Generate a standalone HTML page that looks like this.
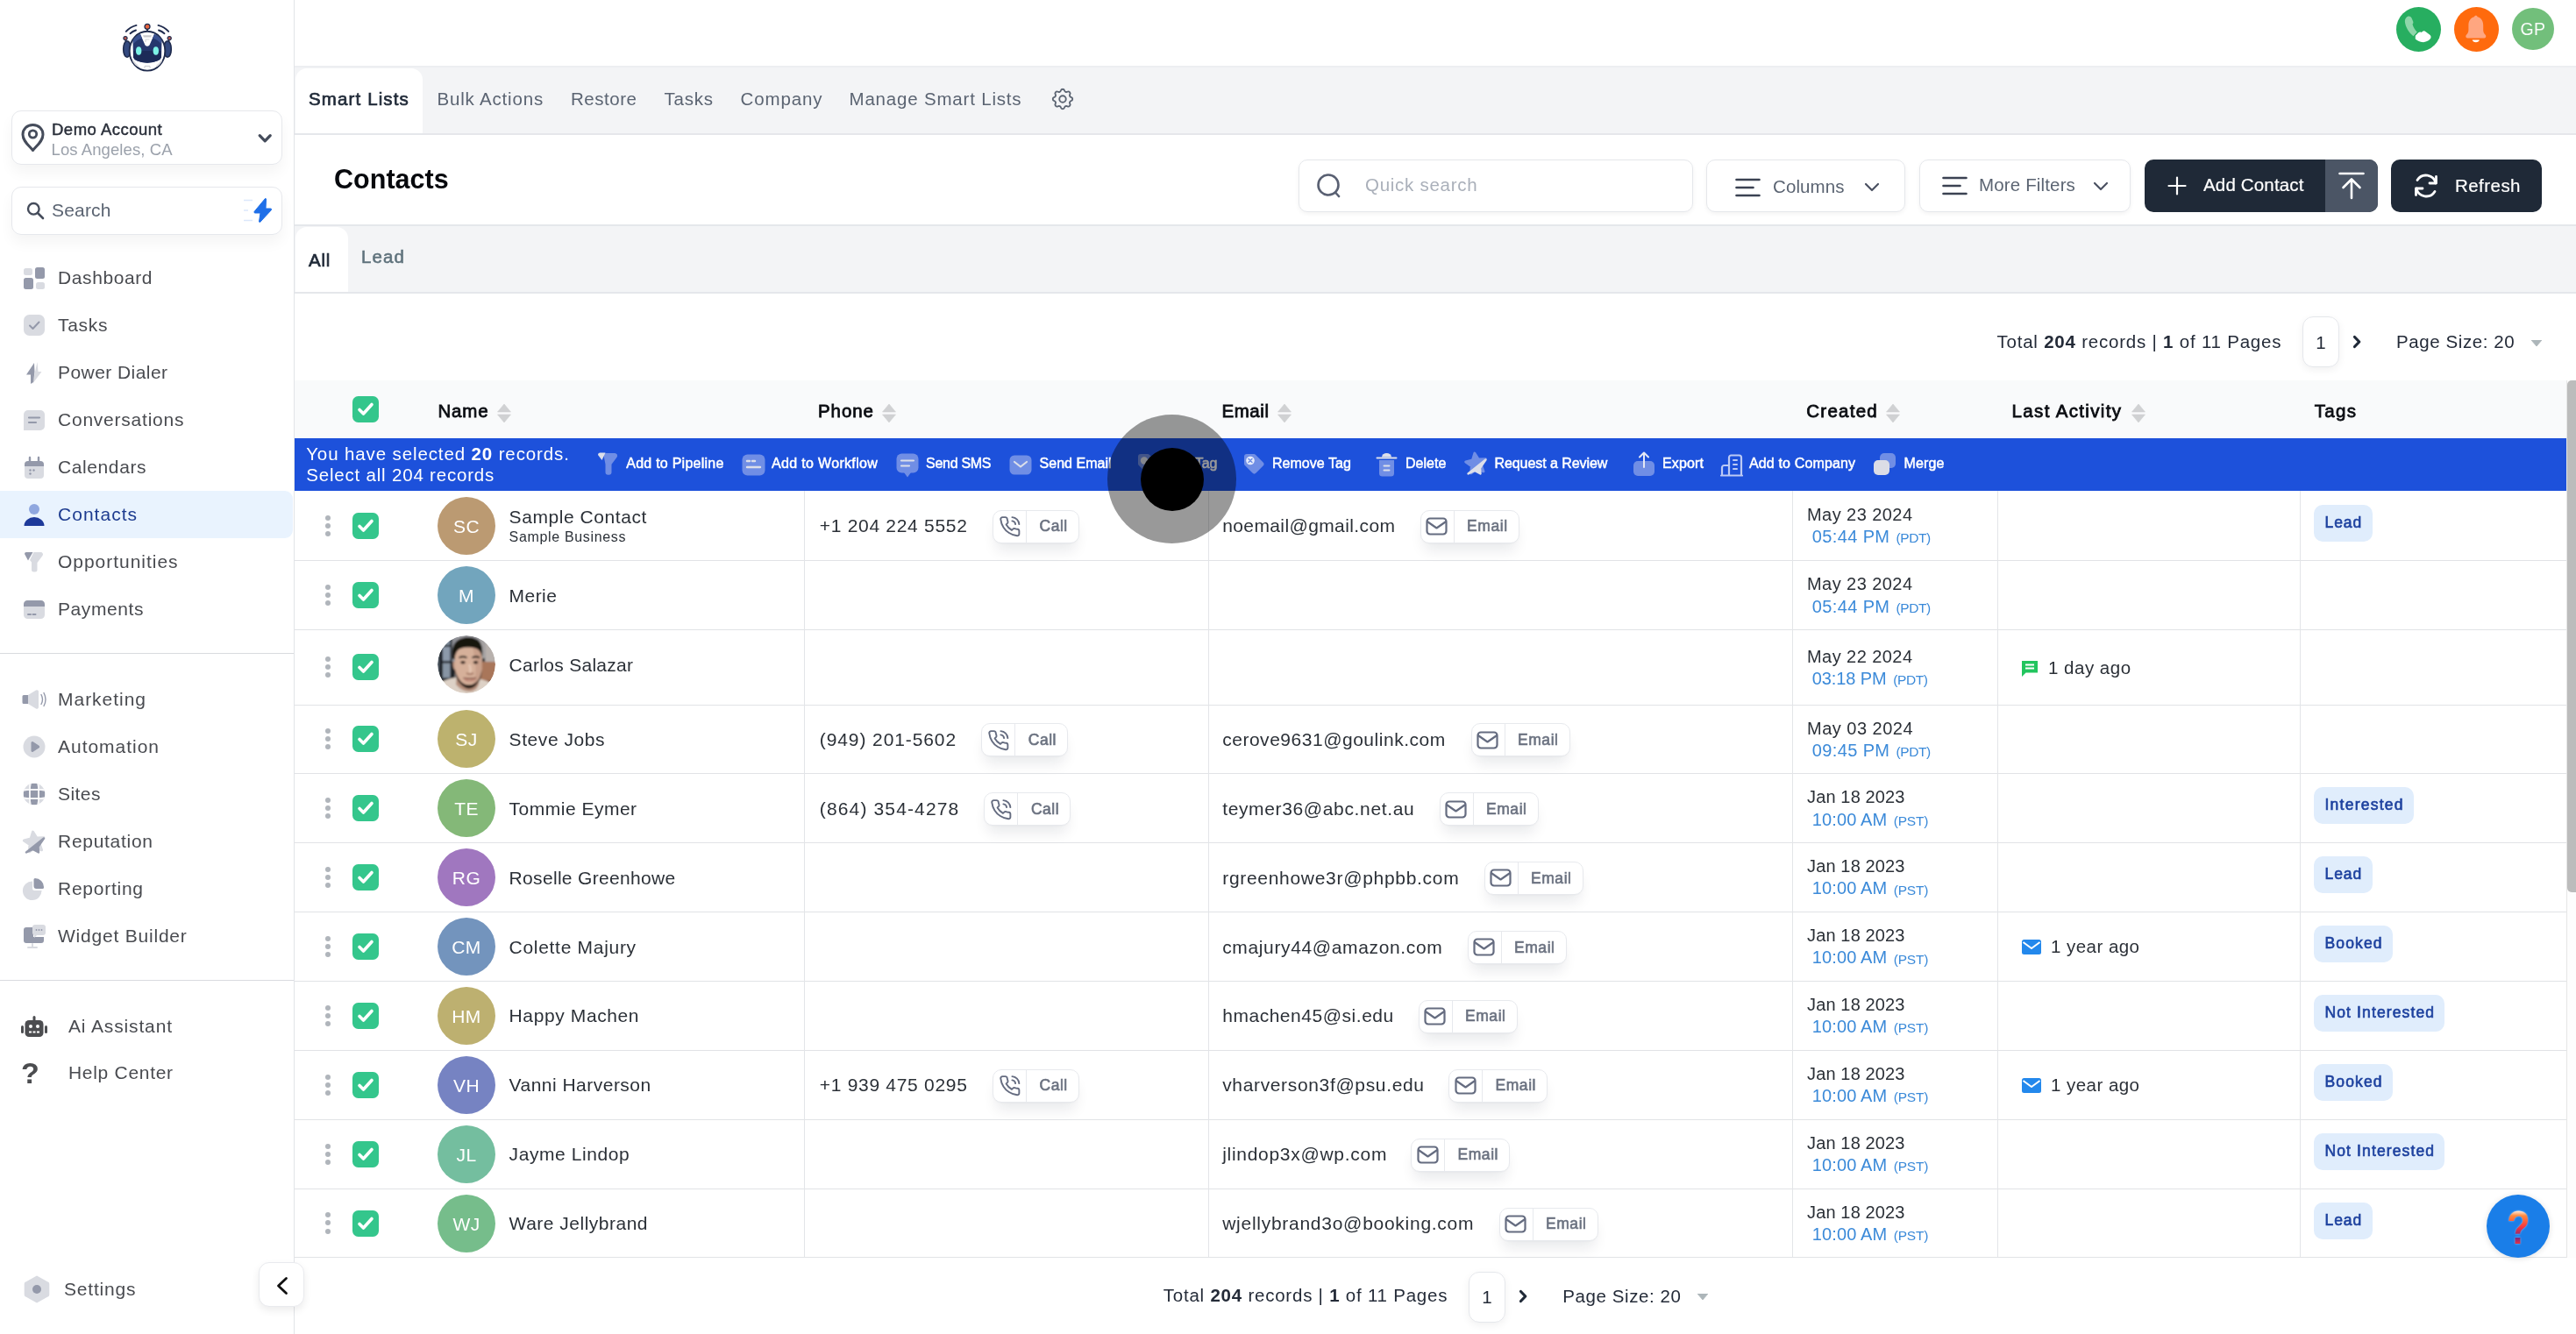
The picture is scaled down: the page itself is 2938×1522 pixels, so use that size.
<!DOCTYPE html>
<html lang="en">
<head>
<meta charset="utf-8">
<title>Contacts</title>
<style>
*{box-sizing:border-box;margin:0;padding:0}
html,body{width:2938px;height:1522px;overflow:hidden;background:#fff}
body{font-family:"Liberation Sans",sans-serif;color:#2d3138;position:relative;-webkit-font-smoothing:antialiased}
#wrap{position:absolute;left:0;top:0;width:2938px;height:1522px;will-change:transform}
.abs{position:absolute}
svg{display:block}
/* sidebar */
#sb{position:absolute;left:0;top:0;width:336px;height:1522px;background:#fff;border-right:1px solid #e2e4e8}
.acct{position:absolute;left:12.500px;top:126px;width:309.500px;height:61.500px;border:1px solid #e6e8ec;border-radius:11px;box-shadow:0 9px 16px rgba(0,0,0,.045)}
.srch{position:absolute;left:12.500px;top:212.500px;width:309.500px;height:55px;border:1px solid #e6e8ec;border-radius:11px;box-shadow:0 9px 16px rgba(0,0,0,.045)}
.nav{position:absolute;left:0;width:334px;height:54px}
.nav .ic{position:absolute;left:25px;top:13px;width:28px;height:28px}
.nav .tx{position:absolute;left:66px;top:0;line-height:54px;font-size:21px;color:#494b50;white-space:nowrap}
.nav.act{background:#e9f3fe;border-radius:0 9px 9px 0}
.nav.act .tx{color:#1d3b8f}
.hr{position:absolute;left:0;width:335px;height:1px;background:#d9dbdf}
/* main */
.t{position:absolute;white-space:nowrap;line-height:1}
.btn{position:absolute;border:1px solid #e5e7eb;border-radius:10px;background:#fff;box-shadow:0 2px 5px rgba(0,0,0,.05)}
.cb{position:absolute;width:30px;height:30px;border-radius:6.500px;background:#34c68c}
.cb svg{position:absolute;left:5px;top:6px}
.kb{position:absolute;left:370.500px;width:6px}
.kb i{display:block;width:6px;height:6px;border-radius:50%;background:#b0b5bb;margin-bottom:3.2px}
.av{position:absolute;left:499px;width:66px;height:66px;border-radius:50%}
.rowline{position:absolute;left:336px;width:2592px;height:1px;background:#e1e3e6}
.vline{position:absolute;top:560px;width:1px;height:874px;background:#e3e5e8}
.cell{position:absolute;white-space:nowrap;font-size:20.5px;color:#2d3138;letter-spacing:.5px;line-height:24px}
.pill{position:absolute;height:38px;border:1px solid #e7e9ed;border-radius:10px;background:#fff;box-shadow:0 12px 16px -4px rgba(16,24,40,.09),0 1px 2px rgba(0,0,0,.03)}
.pi{position:absolute}
.pill .sep{position:absolute;left:37px;top:0;width:1px;height:36px;background:#e7e9ed}
.pill .pt{position:absolute;top:0;line-height:36px;font-size:17.5px;font-weight:700;color:#6b7280;letter-spacing:.2px}

.d1{position:absolute;left:2060px;font-size:20.5px;letter-spacing:.75px;color:#2d3138;white-space:nowrap;line-height:24px}
.d2{position:absolute;left:2066px;font-size:20.5px;letter-spacing:.75px;color:#3b8ad9;white-space:nowrap;line-height:24px}
.d2 small{font-size:15.5px;letter-spacing:.4px}
.tag{position:absolute;left:2639.200px;height:42px;border-radius:10px;background:#e0edfc}
.act{ }
.ba{position:absolute;top:521px;font-size:17px;font-weight:700;color:#fff;white-space:nowrap;line-height:20px;letter-spacing:.1px}
.bi{position:absolute}
.th{position:absolute;top:458px;font-size:21.5px;font-weight:700;color:#0b0d12;white-space:nowrap;line-height:26px;letter-spacing:.2px}
.sort{position:absolute;top:461px;width:16px;height:21px}
@media (max-width:2000px){html,body{width:1469px;height:761px}#wrap{zoom:.5}}
</style>
</head>
<body>
<div id="wrap">
<div id="sb">
<!-- logo -->
<svg class="abs" style="left:138px;top:25px" width="60" height="60" viewBox="0 0 60 60">
 <g fill="none" stroke="#1f2b4d" stroke-width="1.900" stroke-linecap="round">
  <path d="M5.800 10.900 Q10.500 5.800 17.500 3.900"/><path d="M10.500 13.200 Q13.300 10.700 17 9.500"/>
  <path d="M54.200 10.900 Q49.500 5.800 42.500 3.900"/><path d="M49.500 13.200 Q46.700 10.700 43 9.500"/>
 </g>
 <line x1="30" y1="7" x2="30" y2="11.500" stroke="#1f2b4d" stroke-width="1.800"/>
 <circle cx="30" cy="5.300" r="3" fill="#e8643c" stroke="#1f2b4d" stroke-width="1.300"/>
 <path d="M5.500 25 L5.300 20" stroke="#1f2b4d" stroke-width="1.500"/><path d="M54.500 25 L54.700 20" stroke="#1f2b4d" stroke-width="1.500"/>
 <circle cx="5" cy="18.600" r="2.100" fill="#b3564f" stroke="#1f2b4d" stroke-width="1.100"/><circle cx="55.200" cy="18.600" r="2.100" fill="#b3564f" stroke="#1f2b4d" stroke-width="1.100"/>
 <ellipse cx="7" cy="31" rx="4.300" ry="9.300" fill="#33497f" stroke="#1f2b4d" stroke-width="1.600"/>
 <ellipse cx="53" cy="31" rx="4.300" ry="9.300" fill="#33497f" stroke="#1f2b4d" stroke-width="1.600"/>
 <ellipse cx="30" cy="33.200" rx="20.300" ry="22.400" fill="#fff" stroke="#1f2b4d" stroke-width="1.900"/>
 <path d="M13.500 21 Q17 15.500 22 14 L27.500 26.500 Q30 29.200 32.500 26.500 L38 14 Q43 15.500 46.500 21 L46 40.500 Q44.500 45.500 30 46.800 Q15.500 45.500 14 40.500 Z" fill="#25376d"/>
 <path d="M14 33 L46 33 L46 40.500 Q44.500 45.500 30 46.800 Q15.500 45.500 14 40.500 Z" fill="#1c2a58"/>
 <path d="M13.500 21 Q17 15.500 22 14 L24 18.500 Q18 20 14.500 25 Z M46.500 21 Q43 15.500 38 14 L36 18.500 Q42 20 45.500 25 Z" fill="#3a5190"/>
 <ellipse cx="20.200" cy="33" rx="3.200" ry="4.700" fill="#7df2e6"/>
 <ellipse cx="39.800" cy="33" rx="3.200" ry="4.700" fill="#7df2e6"/>
 <path d="M25 15.200 L35 15.200 L34 17.500 L26 17.500 Z" fill="#c9c9cc"/>
 <path d="M28 20 h4.500 M28 20 v3" stroke="#d5d5d8" stroke-width="1.100" fill="none"/>
 <path d="M13.500 44 q2.500 4.500 6 6.500 M46.500 44 q-2.500 4.500 -6 6.500" stroke="#d9dade" stroke-width="1.600" fill="none"/>
 <path d="M26.500 52.500 l1 -2 h5 l1 2" stroke="#d0d1d6" stroke-width="1.300" fill="none"/>
</svg>
<!-- account -->
<div class="acct">
 <svg class="abs" style="left:9px;top:12.500px" width="29" height="34" viewBox="0 0 29 34"><path d="M14.500 2.500 C7.500 2.500 3 7.500 3 13.500 C3 21 10 26 14.500 31.500 C19 26 26 21 26 13.500 C26 7.500 21.500 2.500 14.500 2.500 Z" fill="none" stroke="#454c5b" stroke-width="3" stroke-linejoin="round"/><circle cx="14.500" cy="13" r="4.200" fill="none" stroke="#454c5b" stroke-width="2.800"/></svg>
 <div class="t" style="letter-spacing:0.49px;left:45.500px;top:12px;font-size:18.500px;color:#2a2f3a;-webkit-text-stroke:.45px #2a2f3a">Demo Account</div>
 <div class="t" style="letter-spacing:0.09px;left:45px;top:35px;font-size:18.500px;color:#9ba1ab">Los Angeles, CA</div>
 <svg class="abs" style="left:279px;top:24.500px" width="18" height="13" viewBox="0 0 18 13"><path d="M3.200 2.700 L9.200 8.800 L15.200 2.700" fill="none" stroke="#454c5b" stroke-width="3.300" stroke-linecap="round" stroke-linejoin="round"/></svg>
</div>
<!-- search -->
<div class="srch">
 <svg class="abs" style="left:16.500px;top:16.500px" width="22" height="22" viewBox="0 0 22 22"><circle cx="8.300" cy="8.300" r="6.300" fill="none" stroke="#454c5b" stroke-width="2.400"/><path d="M13 13 L19 19" stroke="#454c5b" stroke-width="2.600" stroke-linecap="round"/></svg>
 <div class="t" style="letter-spacing:0.19px;left:45.500px;top:15.500px;font-size:21px;color:#5b6472">Search</div>
 <svg class="abs" style="left:264px;top:12px" width="34" height="30" viewBox="0 0 34 30"><path d="M0 2.500 H10 M0 14 H5 M0 25.500 H10" stroke="#dbe7fb" stroke-width="1.600"/><path d="M24.500 0.500 L12 15.500 Q11.500 17 13 17 L19 17 L17.500 27 Q18 28 19 27 L31.500 13.500 Q32 12 30.500 12 L25 12 L25.500 1 Q25 0 24.500 0.500 Z" fill="#1f6fe8" stroke="#1f6fe8" stroke-width="1" stroke-linejoin="round"/></svg>
</div>
<div class="nav" style="top:290.0px"><svg class="ic" viewBox="0 0 28 28"><rect x="2" y="3" width="10" height="8" rx="2.500" fill="#d9dbe1"/><rect x="15" y="2" width="11" height="13" rx="2.500" fill="#9499aa"/><rect x="2" y="14" width="11" height="13" rx="2.500" fill="#9499aa"/><rect x="16" y="19" width="10" height="8" rx="2.500" fill="#d9dbe1"/></svg><div class="tx" style="letter-spacing:0.60px">Dashboard</div></div>
<div class="nav" style="top:344.0px"><svg class="ic" viewBox="0 0 28 28"><rect x="2" y="2" width="24" height="24" rx="6.500" fill="#d9dbe1"/><path d="M9 14.500 L12.500 18 L19.500 10.500" fill="none" stroke="#9499aa" stroke-width="2" stroke-linecap="round" stroke-linejoin="round"/></svg><div class="tx" style="letter-spacing:0.71px">Tasks</div></div>
<div class="nav" style="top:398.0px"><svg class="ic" viewBox="0 0 28 28"><path d="M17.500 2 L18.500 13 L22.500 13 L12 27 Z" fill="#d9dbe1"/><path d="M14 3 L5 16.500 L10 16.500 L10 27 L13 25 L14.500 13 Z" fill="#9499aa"/></svg><div class="tx" style="letter-spacing:0.44px">Power Dialer</div></div>
<div class="nav" style="top:452.0px"><svg class="ic" viewBox="0 0 28 28"><rect x="2" y="3" width="24" height="23" rx="5" fill="#d9dbe1"/><path d="M2 20 v6 h6 z" fill="#d9dbe1"/><path d="M8 11.500 H20 M8 17 H16" stroke="#9499aa" stroke-width="2.200" stroke-linecap="round"/></svg><div class="tx" style="letter-spacing:0.77px">Conversations</div></div>
<div class="nav" style="top:506.0px"><svg class="ic" viewBox="0 0 28 28"><rect x="3" y="8" width="22" height="19" rx="4" fill="#d9dbe1"/><path d="M3 11 a4 4 0 0 1 4 -4 h14 a4 4 0 0 1 4 4 v2 h-22 z" fill="#9499aa"/><path d="M9 3 v6 M19 3 v6" stroke="#9499aa" stroke-width="2.400" stroke-linecap="round"/><circle cx="9.500" cy="17.500" r="1.200" fill="#9499aa"/><circle cx="13.500" cy="17.500" r="1.200" fill="#9499aa"/><circle cx="9.500" cy="21.500" r="1.200" fill="#9499aa"/></svg><div class="tx" style="letter-spacing:0.60px">Calendars</div></div>
<div class="nav act" style="top:560.0px"><svg class="ic" viewBox="0 0 28 28"><circle cx="14" cy="8" r="6" fill="#8fa7df"/><path d="M2.500 27 a11.500 10 0 0 1 23 0 z" fill="#1e3a9a"/></svg><div class="tx" style="letter-spacing:1.02px">Contacts</div></div>
<div class="nav" style="top:614.0px"><svg class="ic" viewBox="0 0 28 28"><path d="M13.500 3 h8 a2.500 2.500 0 0 1 2 4 l-6 8 v8 a2.500 2.500 0 0 1 -2.500 2.500 h-1.500 a2.500 2.500 0 0 1 -2.500 -2.500 v-8.500 l-2 -2.500 z" fill="#d9dbe1"/><path d="M3 5 a2 2 0 0 1 2 -2 h7.500 l-5.500 9.500 z" fill="#9499aa"/></svg><div class="tx" style="letter-spacing:0.97px">Opportunities</div></div>
<div class="nav" style="top:668.0px"><svg class="ic" viewBox="0 0 28 28"><rect x="2" y="4" width="24" height="21" rx="4.500" fill="#d9dbe1"/><path d="M2 8.500 a4.500 4.500 0 0 1 4.500 -4.500 h15 a4.500 4.500 0 0 1 4.500 4.500 v2.500 h-24 z" fill="#9499aa"/><path d="M7 20 h3 M12.500 20 h3" stroke="#9499aa" stroke-width="2" stroke-linecap="round"/></svg><div class="tx" style="letter-spacing:0.59px">Payments</div></div>
<div class="hr" style="top:745px"></div>
<div class="nav" style="top:770.6px"><svg class="ic" viewBox="0 0 28 28"><path d="M2 9 h5 v10 h-5 a1.500 1.500 0 0 1 -1.500 -1.500 v-7 a1.500 1.500 0 0 1 1.500 -1.500 z" fill="#9499aa"/><path d="M7 9 L16 3.500 a2 2 0 0 1 3 2 v17 a2 2 0 0 1 -3 2 L7 19 z" fill="#d9dbe1"/><path d="M22 8.500 q3 5.500 0 11 M25 6.500 q4 7.500 0 15" fill="none" stroke="#9499aa" stroke-width="1.400" stroke-linecap="round"/></svg><div class="tx" style="letter-spacing:0.98px">Marketing</div></div>
<div class="nav" style="top:824.6px"><svg class="ic" viewBox="0 0 28 28"><circle cx="14" cy="14" r="12.500" fill="#d9dbe1"/><path d="M10.500 9.500 a1.500 1.500 0 0 1 2.200 -1.300 l6.500 4.200 a1.800 1.800 0 0 1 0 3.200 l-6.500 4.200 a1.500 1.500 0 0 1 -2.200 -1.300 z" fill="#9499aa"/></svg><div class="tx" style="letter-spacing:0.98px">Automation</div></div>
<div class="nav" style="top:878.6px"><svg class="ic" viewBox="0 0 28 28"><circle cx="14" cy="14" r="12.500" fill="#d9dbe1"/><rect x="9.500" y="9.500" width="9" height="9" fill="#9499aa"/><path d="M9.500 8 h9 l-1.500 -6 h-6 z M9.500 20 h9 l-1.500 6 h-6 z M8 9.500 v9 l-6 -1.500 v-6 z M20 9.500 v9 l6 -1.500 v-6 z" fill="#9499aa"/><path d="M9 2.500 V25.500 M19 2.500 V25.500 M2.500 9 H25.500 M2.500 19 H25.500" stroke="#fff" stroke-width="1.400"/></svg><div class="tx" style="letter-spacing:0.45px">Sites</div></div>
<div class="nav" style="top:932.6px"><svg class="ic" viewBox="0 0 28 28"><g transform="rotate(-8 14 14)"><path d="M14 3 l3.400 7.400 8 1 -5.900 5.500 1.600 8 -7.100 -4 -7.100 4 1.600 -8 -5.900 -5.500 8 -1 z" fill="#d9dbe1" stroke="#d9dbe1" stroke-width="3" stroke-linejoin="round"/></g><path d="M25 10.500 L5 26.500 L12.500 23 L19 26.500 L18.500 20 z" fill="#9499aa" stroke="#9499aa" stroke-width="2.400" stroke-linejoin="round"/></svg><div class="tx" style="letter-spacing:0.71px">Reputation</div></div>
<div class="nav" style="top:986.6px"><svg class="ic" viewBox="0 0 28 28"><path d="M12 5.500 v8 a2.500 2.500 0 0 0 2.500 2.500 h8 a10.800 10.800 0 1 1 -10.500 -10.500 z" fill="#d9dbe1"/><path d="M15 2 a10 10 0 0 1 10 10 v.5 a1.500 1.500 0 0 1 -1.500 1.500 h-7 a3 3 0 0 1 -3 -3 v-7.500 a1.500 1.500 0 0 1 1.500 -1.500 z" fill="#9499aa"/></svg><div class="tx" style="letter-spacing:0.74px">Reporting</div></div>
<div class="nav" style="top:1040.6px"><svg class="ic" viewBox="0 0 28 28"><path d="M2 7 a3 3 0 0 1 3 -3 h8 v11 h12 v4 a3 3 0 0 1 -3 3 h-17 a3 3 0 0 1 -3 -3 z" fill="#9499aa"/><path d="M12 23 v3 M7 27 h10" stroke="#d9dbe1" stroke-width="2" stroke-linecap="round"/><rect x="12" y="1" width="15" height="12" rx="3" fill="#d9dbe1"/><path d="M14 12 v4 l4 -4 z" fill="#d9dbe1"/><circle cx="16.500" cy="7" r=".9" fill="#9499aa"/><circle cx="19.500" cy="7" r=".9" fill="#9499aa"/><circle cx="22.500" cy="7" r=".9" fill="#9499aa"/></svg><div class="tx" style="letter-spacing:0.79px">Widget Builder</div></div>
<div class="hr" style="top:1118px"></div>
<div class="nav" style="top:1144px"><svg class="abs" style="left:23px;top:14px" width="32" height="28" viewBox="0 0 32 28"><rect x="14.500" y="1" width="3" height="6" rx="1.500" fill="#4c4d50"/><rect x="5.500" y="6" width="21" height="19" rx="4.500" fill="#4c4d50"/><rect x="1" y="12" width="3" height="9" rx="1.500" fill="#4c4d50"/><rect x="28" y="12" width="3" height="9" rx="1.500" fill="#4c4d50"/><circle cx="12" cy="13" r="2" fill="#fff"/><circle cx="20" cy="13" r="2" fill="#fff"/><path d="M10 19.500 h12" stroke="#fff" stroke-width="1.800" stroke-dasharray="3 1.500"/></svg><div class="tx" style="letter-spacing:0.86px;left:78px">Ai Assistant</div></div>
<div class="nav" style="top:1197px"><div class="t" style="left:24px;top:10px;font-size:34px;font-weight:700;color:#4c4d50">?</div><div class="tx" style="letter-spacing:0.70px;left:78px">Help Center</div></div>
<div class="nav" style="top:1444px"><svg class="abs" style="left:26px;top:11px" width="32" height="32" viewBox="0 0 32 32"><path d="M16 1.500 L28.500 8.500 a1.500 1.500 0 0 1 .8 1.300 V22.200 a1.500 1.500 0 0 1 -.8 1.300 L16 30.500 L3.500 23.500 a1.500 1.500 0 0 1 -.8 -1.300 V9.800 a1.500 1.500 0 0 1 .8 -1.300 z" fill="#d9dbe1" stroke="#d9dbe1" stroke-width="2" stroke-linejoin="round"/><circle cx="16" cy="16" r="5" fill="#9499aa"/></svg><div class="tx" style="letter-spacing:0.80px;left:73px">Settings</div></div>
<div class="abs" style="left:295px;top:1440px;width:52px;height:51px;background:#fff;border:1px solid #e9eaee;border-radius:12px;box-shadow:0 4px 10px rgba(0,0,0,.08);z-index:5"><svg class="abs" style="left:18px;top:15px" width="16" height="22" viewBox="0 0 16 22"><path d="M12.500 2.500 L3.500 11 L12.500 19.500" fill="none" stroke="#111" stroke-width="2.800" stroke-linecap="round" stroke-linejoin="round"/></svg></div>
</div>
<!-- top bar -->
<div class="abs" style="left:336px;top:75px;width:2602px;height:2px;background:#eceef1"></div>
<div class="abs" style="left:2733px;top:8px;width:51px;height:51px;border-radius:50%;background:#27ae60">
 <svg class="abs" style="left:0;top:0" width="51" height="51" viewBox="0 0 51 51"><path d="M11.500 12 c1.800 -2.200 4.800 -2 6 .6 l1.600 3.600 c.6 1.300 .3 2.500 -.6 3.400 c.9 3.400 2.600 6.400 5.300 9 l-4.300 4.600 c-5.400 -4.500 -8.900 -10.300 -9.600 -16.300 c-.2 -1.900 .4 -3.500 1.600 -4.900 z" fill="#8fd6aa"/><path d="M21.800 32.800 l3.200 -3.300 c1 -1 2.400 -1.200 3.600 -.6 l1.300 -1 c1 -.8 2.400 -.8 3.400 0 l5 3.800 c1.500 1.200 1.700 3.200 .5 4.600 c-2.500 2.900 -6.200 4.300 -9.800 3.700 c-2.600 -.4 -5 -1.600 -7.200 -3.400 z" fill="#fff"/></svg>
</div>
<div class="abs" style="left:2799px;top:8px;width:51px;height:51px;border-radius:50%;background:#ff6a0d">
 <svg class="abs" style="left:0;top:0" width="51" height="51" viewBox="0 0 51 51"><path d="M24.800 9.800 c1 0 1.700 .6 1.900 1.500 c4.300 1.200 6.500 5 6.500 9.500 v5.500 c0 2.200 .8 3.800 2.400 5.400 c1.200 1.200 .9 3.300 -1.100 3.900 h-19.400 c-2 -.6 -2.300 -2.700 -1.100 -3.900 c1.600 -1.600 2.400 -3.200 2.400 -5.400 v-5.500 c0 -4.500 2.200 -8.300 6.500 -9.500 c.2 -.9 .9 -1.500 1.900 -1.500 z" fill="#ffa680"/><path d="M20.700 37.500 h8.200 c-.5 1.700 -2 2.800 -4.100 2.800 c-2.100 0 -3.600 -1.100 -4.100 -2.800 z" fill="#fff"/></svg>
</div>
<div class="abs" style="left:2865px;top:9px;width:48px;height:48px;border-radius:50%;background:#72bf7b"><div class="t" style="left:0;width:48px;text-align:center;top:14.500px;font-size:19.500px;color:#fff;letter-spacing:.4px;opacity:.95">GP</div></div>

<!-- tab bar -->
<div class="abs" style="left:336px;top:77px;width:2602px;height:75px;background:#f3f4f6"></div>
<div class="abs" style="left:336px;top:152px;width:2602px;height:2px;background:#e5e7eb"></div>
<div class="abs" style="left:337px;top:78px;width:145px;height:74px;background:#fff;border-radius:13px 13px 0 0"></div>
<div class="t" style="letter-spacing:1.13px;left:352px;top:103px;font-size:20.500px;color:#1f2937;-webkit-text-stroke:.7px #1f2937">Smart Lists</div>
<div class="t tb" style="letter-spacing:0.82px;left:498.500px;top:103px;font-size:20.500px;color:#5b6472">Bulk Actions</div>
<div class="t tb" style="letter-spacing:0.54px;left:651px;top:103px;font-size:20.500px;color:#5b6472">Restore</div>
<div class="t tb" style="letter-spacing:0.78px;left:757.500px;top:103px;font-size:20.500px;color:#5b6472">Tasks</div>
<div class="t tb" style="letter-spacing:0.89px;left:844.500px;top:103px;font-size:20.500px;color:#5b6472">Company</div>
<div class="t tb" style="letter-spacing:0.81px;left:968.500px;top:103px;font-size:20.500px;color:#5b6472">Manage Smart Lists</div>
<svg class="abs" style="left:1197px;top:98px" width="30" height="30" viewBox="0 0 24 24"><path d="M10.325 4.317c.426-1.756 2.924-1.756 3.350 0a1.724 1.724 0 0 0 2.573 1.066c1.543-.94 3.310.826 2.370 2.370a1.724 1.724 0 0 0 1.065 2.572c1.756.426 1.756 2.924 0 3.350a1.724 1.724 0 0 0-1.066 2.573c.940 1.543-.826 3.310-2.370 2.370a1.724 1.724 0 0 0-2.572 1.065c-.426 1.756-2.924 1.756-3.350 0a1.724 1.724 0 0 0-2.573-1.066c-1.543.940-3.310-.826-2.370-2.370a1.724 1.724 0 0 0-1.065-2.572c-1.756-.426-1.756-2.924 0-3.350a1.724 1.724 0 0 0 1.066-2.573c-.940-1.543.826-3.310 2.370-2.370.996.608 2.296.070 2.572-1.065z" fill="none" stroke="#5b6472" stroke-width="1.500"/><circle cx="12" cy="12" r="3" fill="none" stroke="#5b6472" stroke-width="1.500"/></svg>

<!-- contacts header -->
<div class="t" style="letter-spacing:0.03px;left:381px;top:189px;font-size:30.500px;font-weight:700;color:#07090d">Contacts</div>
<div class="btn" style="left:1481px;top:182px;width:450px;height:60px">
 <svg class="abs" style="left:19px;top:14px" width="32" height="32" viewBox="0 0 32 32"><circle cx="14" cy="14" r="11.500" fill="none" stroke="#596072" stroke-width="2.600"/><path d="M22 22.500 L26 27" stroke="#596072" stroke-width="2.600" stroke-linecap="round"/></svg>
 <div class="t" style="letter-spacing:0.73px;left:75px;top:18px;font-size:20.500px;color:#aab0ba">Quick search</div>
</div>
<div class="btn" style="left:1946px;top:182px;width:227px;height:60px">
 <svg class="abs" style="left:32px;top:20px" width="30" height="22" viewBox="0 0 30 22"><path d="M1.500 2 H27.500 M1.500 11 H20.500 M1.500 20 H27.500" stroke="#3b4252" stroke-width="2.600" stroke-linecap="round"/></svg>
 <div class="t" style="letter-spacing:0.10px;left:75px;top:19.500px;font-size:20.500px;color:#5b6472">Columns</div>
 <svg class="abs" style="left:178px;top:24px" width="20" height="13" viewBox="0 0 20 13"><path d="M3 3 L10 10 L17 3" fill="none" stroke="#4b5162" stroke-width="2.200" stroke-linecap="round" stroke-linejoin="round"/></svg>
</div>
<div class="btn" style="left:2189px;top:182px;width:241px;height:60px">
 <svg class="abs" style="left:25px;top:18px" width="30" height="22" viewBox="0 0 30 22"><path d="M1.500 2 H27.500 M1.500 11 H20.500 M1.500 20 H27.500" stroke="#3b4252" stroke-width="2.600" stroke-linecap="round"/></svg>
 <div class="t" style="letter-spacing:0.15px;left:67px;top:17.500px;font-size:20.500px;color:#5b6472">More Filters</div>
 <svg class="abs" style="left:196px;top:23px" width="20" height="13" viewBox="0 0 20 13"><path d="M3 3 L10 10 L17 3" fill="none" stroke="#4b5162" stroke-width="2.200" stroke-linecap="round" stroke-linejoin="round"/></svg>
</div>
<div class="abs" style="left:2446px;top:182px;width:266px;height:60px;border-radius:10px;background:#1f2937;overflow:hidden">
 <div class="abs" style="left:206px;top:0;width:60px;height:60px;background:#4b5565"></div>
 <svg class="abs" style="left:26px;top:19px" width="22" height="22" viewBox="0 0 22 22"><path d="M11 1.500 V20.500 M1.500 11 H20.500" stroke="#fff" stroke-width="2.200" stroke-linecap="round"/></svg>
 <div class="t" style="letter-spacing:0.16px;left:67px;top:19px;font-size:20.500px;color:#fff;-webkit-text-stroke:.2px #fff">Add Contact</div>
 <svg class="abs" style="left:220px;top:13px" width="32" height="34" viewBox="0 0 32 34"><path d="M2.500 3 H29.500 M16 31 V10 M6.500 19 L16 9.500 L25.500 19" fill="none" stroke="#fff" stroke-width="2.600" stroke-linecap="round" stroke-linejoin="round"/></svg>
</div>
<div class="abs" style="left:2727px;top:182px;width:172px;height:60px;border-radius:10px;background:#1f2937">
 <svg class="abs" style="left:24px;top:14px" width="32" height="32" viewBox="0 0 32 32"><g fill="none" stroke="#fff" stroke-width="2.800" stroke-linecap="round" stroke-linejoin="round"><path d="M27 13 A11.500 11.500 0 0 0 6 9.500"/><path d="M5 19 A11.500 11.500 0 0 0 26 22.500"/><path d="M27.500 5.500 V13 H20"/><path d="M4.500 26.500 V19 H12"/></g></svg>
 <div class="t" style="letter-spacing:0.45px;left:73px;top:20px;font-size:20.500px;color:#fff;-webkit-text-stroke:.2px #fff">Refresh</div>
</div>
<div class="abs" style="left:336px;top:256px;width:2602px;height:2px;background:#e5e7eb"></div>

<!-- All / Lead -->
<div class="abs" style="left:336px;top:258px;width:2602px;height:75px;background:#f3f4f6"></div>
<div class="abs" style="left:336px;top:333px;width:2602px;height:2px;background:#e5e7eb"></div>
<div class="abs" style="left:337px;top:259px;width:60px;height:74px;background:#fff;border-radius:13px 13px 0 0"></div>
<div class="t" style="letter-spacing:0.76px;left:352px;top:286.500px;font-size:20.500px;color:#1f2937;-webkit-text-stroke:.7px #1f2937">All</div>
<div class="t" style="letter-spacing:1.07px;left:412px;top:283px;font-size:20.500px;color:#5f727c;-webkit-text-stroke:.55px #5f727c">Lead</div>

<!-- pagination top -->
<div class="t pg" style="letter-spacing:0.78px;left:2277.500px;top:379.700px;font-size:20.500px;color:#242b38">Total <b>204</b> records | <b>1</b> of 11 Pages</div>
<div class="btn" style="left:2626px;top:361px;width:42px;height:58px;border-radius:12px;box-shadow:0 3px 10px rgba(0,0,0,.06)"><div class="t" style="left:0;width:40px;text-align:center;top:18.500px;font-size:20.500px;color:#242b38">1</div></div>
<svg class="abs" style="left:2682px;top:382px" width="13" height="16" viewBox="0 0 13 16"><path d="M3.500 2.500 L8.800 8 L3.500 13.500" fill="none" stroke="#1f2937" stroke-width="3.200" stroke-linecap="round" stroke-linejoin="round"/></svg>
<div class="t pg" style="letter-spacing:0.59px;left:2733px;top:380.200px;font-size:20.500px;color:#242b38">Page Size: 20</div>
<svg class="abs" style="left:2886.500px;top:387.500px" width="12" height="7" viewBox="0 0 12 7"><path d="M0 0 H12 L6 7 Z" fill="#adb6ba" stroke="#adb6ba" stroke-width=".8" stroke-linejoin="round"/></svg>
<div class="abs" style="left:336px;top:434px;width:2592px;height:66px;background:#f9fafb"></div>
<div class="cb" style="left:402px;top:452px"><svg width="20" height="18" viewBox="0 0 20 18"><path d="M3 9.500 L7.500 14 L17 3.500" fill="none" stroke="#fff" stroke-width="3.600" stroke-linecap="round" stroke-linejoin="round"/></svg></div>
<div class="t" style="left:499.5px;top:459.4px;font-size:20.5px;-webkit-text-stroke:0.8px #0b0d12;color:#0b0d12;letter-spacing:0.81px;">Name</div>
<svg class="sort" style="left:567.2px;top:460.500px" viewBox="0 0 16 21"><path d="M8 0 L15.500 9 H.5 Z M.5 12 H15.500 L8 21 Z" fill="#d0d1d3" stroke="#d0d1d3" stroke-width=".6" stroke-linejoin="round"/></svg>
<div class="t" style="left:933.0px;top:459.4px;font-size:20.5px;-webkit-text-stroke:0.8px #0b0d12;color:#0b0d12;letter-spacing:0.93px;">Phone</div>
<svg class="sort" style="left:1006px;top:460.500px" viewBox="0 0 16 21"><path d="M8 0 L15.500 9 H.5 Z M.5 12 H15.500 L8 21 Z" fill="#d0d1d3" stroke="#d0d1d3" stroke-width=".6" stroke-linejoin="round"/></svg>
<div class="t" style="left:1393.5px;top:459.4px;font-size:20.5px;-webkit-text-stroke:0.8px #0b0d12;color:#0b0d12;letter-spacing:0.56px;">Email</div>
<svg class="sort" style="left:1457px;top:460.500px" viewBox="0 0 16 21"><path d="M8 0 L15.500 9 H.5 Z M.5 12 H15.500 L8 21 Z" fill="#d0d1d3" stroke="#d0d1d3" stroke-width=".6" stroke-linejoin="round"/></svg>
<div class="t" style="left:2060.3px;top:459.4px;font-size:20.5px;-webkit-text-stroke:0.8px #0b0d12;color:#0b0d12;letter-spacing:1.25px;">Created</div>
<svg class="sort" style="left:2150.6px;top:460.500px" viewBox="0 0 16 21"><path d="M8 0 L15.500 9 H.5 Z M.5 12 H15.500 L8 21 Z" fill="#d0d1d3" stroke="#d0d1d3" stroke-width=".6" stroke-linejoin="round"/></svg>
<div class="t" style="left:2294.6px;top:459.4px;font-size:20.5px;-webkit-text-stroke:0.8px #0b0d12;color:#0b0d12;letter-spacing:1.35px;">Last Activity</div>
<svg class="sort" style="left:2430.7px;top:460.500px" viewBox="0 0 16 21"><path d="M8 0 L15.500 9 H.5 Z M.5 12 H15.500 L8 21 Z" fill="#d0d1d3" stroke="#d0d1d3" stroke-width=".6" stroke-linejoin="round"/></svg>
<div class="t" style="left:2639.8px;top:459.4px;font-size:20.5px;-webkit-text-stroke:0.8px #0b0d12;color:#0b0d12;letter-spacing:1.30px;">Tags</div>
<div class="abs" style="left:336px;top:500px;width:2592px;height:60px;background:#1d51db"></div>
<div class="t" style="letter-spacing:0.88px;left:349.2px;top:507.7px;font-size:20.5px;color:#fff">You have selected <b>20</b> records.</div>
<div class="t" style="left:349.2px;top:532.4px;font-size:20.5px;color:#fff;letter-spacing:0.81px;">Select all 204 records</div>
<svg class="bi" style="left:680.5px;top:515px" width="24" height="30" viewBox="0 0 24 30"><path d="M7 2 h13 a3 3 0 0 1 2.500 4.800 l-6 8 v9 a3 3 0 0 1 -3 3 h-1 a3 3 0 0 1 -3 -3 v-9 z" fill="#708ee5"/><path d="M1 4 a2.500 2.500 0 0 1 2.500 -2.500 h6 l-4 8.500 z" fill="#dcdfea"/></svg>
<div class="t" style="left:714.3px;top:521.2px;font-size:16px;-webkit-text-stroke:0.5px #fff;color:#fff;letter-spacing:0.24px;">Add to Pipeline</div>
<svg class="bi" style="left:845.5px;top:518px" width="27" height="25" viewBox="0 0 27 25"><rect x=".5" y=".5" width="26" height="24" rx="6" fill="#708ee5"/><path d="M6 8 h3 M12 8 h3 M6 15 h15" stroke="#dcdfea" stroke-width="2.400" stroke-linecap="round"/></svg>
<div class="t" style="left:880.0px;top:521.2px;font-size:16px;-webkit-text-stroke:0.5px #fff;color:#fff;letter-spacing:0.33px;">Add to Workflow</div>
<svg class="bi" style="left:1021.5px;top:517px" width="26" height="29" viewBox="0 0 26 29"><rect x=".5" y=".5" width="25" height="22" rx="6" fill="#708ee5"/><path d="M9 22 h8 l-4 5.500 z" fill="#708ee5"/><path d="M6 8.500 h14 M6 14.500 h9" stroke="#dcdfea" stroke-width="2.200" stroke-linecap="round"/></svg>
<div class="t" style="left:1056.0px;top:521.2px;font-size:16px;-webkit-text-stroke:0.5px #fff;color:#fff;letter-spacing:-0.28px;">Send SMS</div>
<svg class="bi" style="left:1151px;top:519px" width="26" height="23" viewBox="0 0 26 23"><rect x=".5" y=".5" width="25" height="22" rx="5.500" fill="#708ee5"/><path d="M6 8 l7 5.500 l7 -5.500" fill="none" stroke="#dcdfea" stroke-width="2.200" stroke-linecap="round" stroke-linejoin="round"/></svg>
<div class="t" style="left:1185.6px;top:521.2px;font-size:16px;-webkit-text-stroke:0.5px #fff;color:#fff;letter-spacing:0.02px;">Send Email</div>
<svg class="bi" style="left:1296px;top:517px" width="25" height="26" viewBox="0 0 25 26"><path d="M2 4 a3 3 0 0 1 3 -3 h8 a3 3 0 0 1 2.100 .9 l8.500 8.500 a3 3 0 0 1 0 4.200 l-8 8 a3 3 0 0 1 -4.200 0 l-8.500 -8.500 a3 3 0 0 1 -.9 -2.100 z" fill="#708ee5"/><circle cx="9" cy="8.500" r="4.200" fill="#dcdfea"/></svg>
<div class="t" style="left:1330.0px;top:521.2px;font-size:16px;-webkit-text-stroke:0.5px #fff;color:#fff;letter-spacing:-0.00px;">Add Tag</div>
<svg class="bi" style="left:1417px;top:517px" width="25" height="26" viewBox="0 0 25 26"><path d="M2 4 a3 3 0 0 1 3 -3 h8 a3 3 0 0 1 2.100 .9 l8.500 8.500 a3 3 0 0 1 0 4.200 l-8 8 a3 3 0 0 1 -4.200 0 l-8.500 -8.500 a3 3 0 0 1 -.9 -2.100 z" fill="#708ee5"/><circle cx="9" cy="8.500" r="4.800" fill="#e8eefc"/><path d="M7 6.500 l4 4 M11 6.500 l-4 4" stroke="#708ee5" stroke-width="1.500" stroke-linecap="round"/></svg>
<div class="t" style="left:1451.0px;top:521.2px;font-size:16px;-webkit-text-stroke:0.5px #fff;color:#fff;letter-spacing:0.03px;">Remove Tag</div>
<svg class="bi" style="left:1569px;top:515px" width="25" height="30" viewBox="0 0 25 30"><path d="M4 10 h17 v15 a3.500 3.500 0 0 1 -3.500 3.500 h-10 a3.500 3.500 0 0 1 -3.500 -3.500 z" fill="#708ee5"/><path d="M7 6.500 a5.500 4.500 0 0 1 11 0 z" fill="#dcdfea"/><path d="M1.500 7.500 h22" stroke="#dcdfea" stroke-width="2" stroke-linecap="round"/><path d="M9.500 16.500 h6 M9.500 21.500 h6" stroke="#dcdfea" stroke-width="2" stroke-linecap="round"/></svg>
<div class="t" style="left:1603.0px;top:521.2px;font-size:16px;-webkit-text-stroke:0.5px #fff;color:#fff;letter-spacing:0.01px;">Delete</div>
<svg class="bi" style="left:1669.5px;top:515px" width="27" height="28" viewBox="0 0 27 28"><g transform="rotate(-8 13.5 14)"><path d="M13.500 2 l3.400 7.400 8 1 -5.900 5.500 1.600 8 -7.100 -4 -7.100 4 1.600 -8 -5.900 -5.500 8 -1 z" fill="#708ee5" stroke="#708ee5" stroke-width="3" stroke-linejoin="round"/></g><path d="M24.500 9.500 L4.500 25.500 L12 22 L18.500 25.500 L18 19 z" fill="#dcdfea" stroke="#dcdfea" stroke-width="2.400" stroke-linejoin="round"/></svg>
<div class="t" style="left:1704.4px;top:521.2px;font-size:16px;-webkit-text-stroke:0.5px #fff;color:#fff;letter-spacing:-0.06px;">Request a Review</div>
<svg class="bi" style="left:1861.5px;top:514px" width="26" height="31" viewBox="0 0 26 31"><path d="M1 17 a5 5 0 0 1 5 -5 h14 a5 5 0 0 1 5 5 v7 a5 5 0 0 1 -5 5 h-14 a5 5 0 0 1 -5 -5 z" fill="#708ee5"/><path d="M13 19 V3 M8 7.500 L13 2.500 L18 7.500" fill="none" stroke="#e4e8f5" stroke-width="2" stroke-linecap="round" stroke-linejoin="round"/></svg>
<div class="t" style="left:1896.0px;top:521.2px;font-size:16px;-webkit-text-stroke:0.5px #fff;color:#fff;letter-spacing:0.15px;">Export</div>
<svg class="bi" style="left:1962px;top:517px" width="26" height="27" viewBox="0 0 26 27"><path d="M10 25.500 V5 a2.500 2.500 0 0 1 2.500 -2.500 h9 a2.500 2.500 0 0 1 2.500 2.500 V25.500 M10 14 H4.500 a2.500 2.500 0 0 0 -2.500 2.500 V25.500 M1 25.500 H25" fill="none" stroke="#bccaf5" stroke-width="2.200" stroke-linecap="round" stroke-linejoin="round"/><path d="M15 8 h4 M15 13 h4 M15 18 h4" stroke="#bccaf5" stroke-width="2" stroke-linecap="round"/></svg>
<div class="t" style="left:1995.0px;top:521.2px;font-size:16px;-webkit-text-stroke:0.5px #fff;color:#fff;letter-spacing:0.14px;">Add to Company</div>
<svg class="bi" style="left:2136px;top:516px" width="27" height="27" viewBox="0 0 27 27"><rect x="8" y="1" width="18" height="17" rx="5" fill="#708ee5"/><rect x="1" y="9" width="18" height="17" rx="5" fill="#dcdde6"/></svg>
<div class="t" style="left:2171.6px;top:521.2px;font-size:16px;-webkit-text-stroke:0.5px #fff;color:#fff;letter-spacing:0.14px;">Merge</div>
<div class="rowline" style="top:639.3px"></div>
<div class="kb" style="top:587.8px"><i></i><i></i><i></i></div>
<div class="cb" style="left:402px;top:585.0px"><svg width="20" height="18" viewBox="0 0 20 18"><path d="M3 9.500 L7.500 14 L17 3.500" fill="none" stroke="#fff" stroke-width="3.600" stroke-linecap="round" stroke-linejoin="round"/></svg></div>
<div class="av" style="top:566.7px;background:#bb9a72"><div class="t" style="left:0;width:66px;text-align:center;top:22.9px;font-size:21px;letter-spacing:.4px;color:#fff">SC</div></div>
<div class="t" style="left:580.6px;top:578.8px;font-size:21px;color:#2b3037;letter-spacing:0.57px;">Sample Contact</div>
<div class="t" style="left:580.6px;top:605.1px;font-size:16px;color:#2b3037;letter-spacing:0.66px;">Sample Business</div>
<div class="t" style="left:934.8px;top:589.2px;font-size:21px;color:#2b3037;letter-spacing:0.70px;">+1 204 224 5552</div>
<div class="pill" style="left:1131.6px;top:581.5px;width:99px"><span class="pi" style="left:6px;top:5.5px"><svg width="25.500" height="25.500" viewBox="0 0 24 24"><path d="M22 16.920v3a2 2 0 0 1-2.180 2 19.790 19.790 0 0 1-8.630-3.070 19.500 19.500 0 0 1-6-6 19.790 19.790 0 0 1-3.070-8.670A2 2 0 0 1 4.110 2h3a2 2 0 0 1 2 1.720 12.840 12.840 0 0 0 .7 2.810 2 2 0 0 1-.45 2.110L8.090 9.910a16 16 0 0 0 6 6l1.270-1.270a2 2 0 0 1 2.110-.45 12.840 12.840 0 0 0 2.810.7A2 2 0 0 1 22 16.920z" fill="none" stroke="#656c80" stroke-width="1.800" stroke-linejoin="round"/><path d="M14.500 2 a8 8 0 0 1 7.500 7.500 M14.500 6 a4 4 0 0 1 3.500 3.500" fill="none" stroke="#656c80" stroke-width="1.800" stroke-linecap="round"/></svg></span><div class="sep"></div><div class="t" style="left:53.0px;top:9.8px;font-size:17.5px;-webkit-text-stroke:0.6px #6b7280;color:#6b7280;letter-spacing:0.48px;">Call</div></div>
<div class="t" style="left:1394.2px;top:589.2px;font-size:21px;color:#2b3037;letter-spacing:0.39px;">noemail@gmail.com</div>
<div class="pill" style="left:1619.6px;top:581.5px;width:113px"><span class="pi" style="left:5.5px;top:5.5px"><svg width="25" height="25" viewBox="0 0 25 25"><rect x="1.500" y="3.500" width="22" height="18" rx="3.500" fill="none" stroke="#656c80" stroke-width="2.200"/><path d="M2.500 7.500 L12.500 14.500 L22.500 7.500" fill="none" stroke="#656c80" stroke-width="2.200" stroke-linecap="round" stroke-linejoin="round"/></svg></span><div class="sep"></div><div class="t" style="left:52.5px;top:9.8px;font-size:17.5px;-webkit-text-stroke:0.6px #6b7280;color:#6b7280;letter-spacing:0.56px;">Email</div></div>
<div class="t" style="left:2061.0px;top:576.9px;font-size:20px;color:#2b3037;letter-spacing:0.44px;">May 23 2024</div>
<div class="t" style="left:2066.7px;top:602.1px;font-size:20px;color:#3b8ad9;letter-spacing:0.39px;">05:44 PM</div>
<div class="t" style="left:2162.6px;top:606.2px;font-size:15.5px;color:#3b8ad9;letter-spacing:-0.43px;">(PDT)</div>
<div class="tag" style="top:575.5px;width:66.8px"><div class="t" style="left:12.3px;top:12.2px;font-size:17.5px;-webkit-text-stroke:0.65px #1e429f;color:#1e429f;letter-spacing:0.96px;">Lead</div></div>
<div class="rowline" style="top:718.3px"></div>
<div class="kb" style="top:667.0px"><i></i><i></i><i></i></div>
<div class="cb" style="left:402px;top:664.3px"><svg width="20" height="18" viewBox="0 0 20 18"><path d="M3 9.500 L7.500 14 L17 3.500" fill="none" stroke="#fff" stroke-width="3.600" stroke-linecap="round" stroke-linejoin="round"/></svg></div>
<div class="av" style="top:646.2px;background:#72a5bd"><div class="t" style="left:0;width:66px;text-align:center;top:22.9px;font-size:21px;letter-spacing:.4px;color:#fff">M</div></div>
<div class="t" style="left:580.6px;top:668.7px;font-size:21px;color:#2b3037;letter-spacing:0.45px;">Merie</div>
<div class="t" style="left:2061.0px;top:656.4px;font-size:20px;color:#2b3037;letter-spacing:0.44px;">May 23 2024</div>
<div class="t" style="left:2066.7px;top:681.6px;font-size:20px;color:#3b8ad9;letter-spacing:0.39px;">05:44 PM</div>
<div class="t" style="left:2162.6px;top:685.7px;font-size:15.5px;color:#3b8ad9;letter-spacing:-0.43px;">(PDT)</div>
<div class="rowline" style="top:803.5px"></div>
<div class="kb" style="top:749.1px"><i></i><i></i><i></i></div>
<div class="cb" style="left:402px;top:746.4px"><svg width="20" height="18" viewBox="0 0 20 18"><path d="M3 9.500 L7.500 14 L17 3.500" fill="none" stroke="#fff" stroke-width="3.600" stroke-linecap="round" stroke-linejoin="round"/></svg></div>
<div class="av" style="top:725.2px;overflow:hidden"><svg width="66" height="66" viewBox="0 0 66 66"><defs><filter id="pb" x="-10%" y="-10%" width="120%" height="120%"><feGaussianBlur stdDeviation=".9"/></filter><clipPath id="pc"><circle cx="33" cy="33" r="33"/></clipPath></defs><g clip-path="url(#pc)"><g filter="url(#pb)"><rect x="-4" y="-4" width="74" height="74" fill="#9a9a9f"/><rect x="-4" y="-4" width="24" height="60" fill="#1d2127"/><rect x="6" y="4" width="8.500" height="7" fill="#7d8a99"/><rect x="6" y="13" width="8.500" height="16" fill="#8d9aaa"/><rect x="6" y="31.500" width="8.500" height="17" fill="#8794a3"/><rect x="-2" y="20" width="4" height="28" fill="#59626d"/><rect x="16.500" y="0" width="6" height="30" fill="#8e9096"/><rect x="48" y="0" width="20" height="31" fill="#a5a2a2"/><rect x="55" y="6" width="12" height="24" fill="#b8b1ad"/><rect x="51" y="26" width="3" height="4" fill="#222"/><rect x="47" y="30" width="22" height="23" fill="#a9765a"/><rect x="47" y="51" width="22" height="4" fill="#8a5f48"/><path d="M0 70 L0 56 Q8 50 20 48 L50 50 Q62 53 68 60 L68 70 Z" fill="#ddd1c6"/><path d="M20 30 Q17 29 17.500 34 Q18 39 21 40 Z" fill="#c39a85"/><path d="M22 44 L21 56 Q28 64 36 64 Q44 64 47 56 L48 46 Z" fill="#b58f7b"/><path d="M19.500 22 Q19 12 35 11.500 Q50 12 50.500 24 L50.500 40 Q50.500 49 46 54 Q41 60 36 60 Q30 60 25 54 Q20.500 49 20 40 Z" fill="#d6b09a"/><path d="M40 14 Q49 15 50.500 24 L50.500 40 Q50.500 49 46 54 Q43 58 40 59.500 Q44 48 43.500 36 Q43 24 40 14 Z" fill="#c39a84" opacity=".7"/><path d="M17 27 Q14.500 8 27 3.500 Q38 0 46 5 Q52.500 10 51 25 Q49 16 43 14.500 Q34 12.500 26 15 Q20.500 17 19.500 27 Z" fill="#18130f"/><path d="M20 38 Q20.500 49 25 54 Q30 60 36 60 Q41 60 46 54 Q50.500 49 50.500 39 Q49 50 44 53.500 Q40 56.500 36 56.500 Q31 56.500 27 53 Q22 48 20 38 Z" fill="#2c1f18"/><path d="M27 55.500 Q36 59 45 55.500 Q41 60.500 36 60.500 Q31 60.500 27 55.500 Z" fill="#1d140f"/><path d="M24.500 25.500 Q29 23 33.500 25.500" stroke="#1f1611" stroke-width="1.900" fill="none"/><path d="M39.500 25.500 Q44 23 48 25.500" stroke="#1f1611" stroke-width="1.900" fill="none"/><ellipse cx="29" cy="30.800" rx="2.800" ry="1.700" fill="#2a1a14"/><ellipse cx="43.500" cy="30.800" rx="2.800" ry="1.700" fill="#2a1a14"/><path d="M36 33 Q38.500 38 37 42.500" stroke="#e6c7b4" stroke-width="2.600" fill="none"/><path d="M33 43 Q37 45.500 41 43" stroke="#9c6f5c" stroke-width="1.500" fill="none"/><path d="M29.500 48.500 Q36.500 50 44 48.500" stroke="#7d4f44" stroke-width="1.500" fill="none"/><path d="M31 50 Q36.500 53.500 42.500 50" stroke="#c08878" stroke-width="2.200" fill="none"/></g></g></svg></div>
<div class="t" style="left:580.6px;top:747.7px;font-size:21px;color:#2b3037;letter-spacing:0.29px;">Carlos Salazar</div>
<div class="t" style="left:2061.0px;top:738.5px;font-size:20px;color:#2b3037;letter-spacing:0.44px;">May 22 2024</div>
<div class="t" style="left:2066.7px;top:763.7px;font-size:20px;color:#3b8ad9;letter-spacing:-0.09px;">03:18 PM</div>
<div class="t" style="left:2159.3px;top:767.9px;font-size:15.5px;color:#3b8ad9;letter-spacing:-0.43px;">(PDT)</div>
<svg class="abs" style="left:2305px;top:753.0px" width="20" height="19" viewBox="0 0 20 19"><path d="M1 1 h18 v13.500 h-13.500 l-4.500 4.500 z" fill="#22c55e"/><path d="M5 5.500 h10 M5 9.500 h10" stroke="#fff" stroke-width="1.800"/></svg>
<div class="t" style="left:2336.0px;top:751.6px;font-size:20.5px;color:#2b3037;letter-spacing:0.50px;">1 day ago</div>
<div class="rowline" style="top:882.3px"></div>
<div class="kb" style="top:831.1px"><i></i><i></i><i></i></div>
<div class="cb" style="left:402px;top:828.4px"><svg width="20" height="18" viewBox="0 0 20 18"><path d="M3 9.500 L7.500 14 L17 3.500" fill="none" stroke="#fff" stroke-width="3.600" stroke-linecap="round" stroke-linejoin="round"/></svg></div>
<div class="av" style="top:810.4px;background:#bdb26e"><div class="t" style="left:0;width:66px;text-align:center;top:22.9px;font-size:21px;letter-spacing:.4px;color:#fff">SJ</div></div>
<div class="t" style="left:580.6px;top:832.9px;font-size:21px;color:#2b3037;letter-spacing:0.57px;">Steve Jobs</div>
<div class="t" style="left:934.8px;top:832.9px;font-size:21px;color:#2b3037;letter-spacing:0.90px;">(949) 201-5602</div>
<div class="pill" style="left:1118.8px;top:825.2px;width:99px"><span class="pi" style="left:6px;top:5.5px"><svg width="25.500" height="25.500" viewBox="0 0 24 24"><path d="M22 16.920v3a2 2 0 0 1-2.180 2 19.790 19.790 0 0 1-8.630-3.070 19.500 19.500 0 0 1-6-6 19.790 19.790 0 0 1-3.070-8.670A2 2 0 0 1 4.110 2h3a2 2 0 0 1 2 1.720 12.840 12.840 0 0 0 .7 2.810 2 2 0 0 1-.45 2.110L8.090 9.910a16 16 0 0 0 6 6l1.270-1.270a2 2 0 0 1 2.110-.45 12.840 12.840 0 0 0 2.810.7A2 2 0 0 1 22 16.920z" fill="none" stroke="#656c80" stroke-width="1.800" stroke-linejoin="round"/><path d="M14.500 2 a8 8 0 0 1 7.500 7.500 M14.500 6 a4 4 0 0 1 3.500 3.500" fill="none" stroke="#656c80" stroke-width="1.800" stroke-linecap="round"/></svg></span><div class="sep"></div><div class="t" style="left:53.0px;top:9.8px;font-size:17.5px;-webkit-text-stroke:0.6px #6b7280;color:#6b7280;letter-spacing:0.48px;">Call</div></div>
<div class="t" style="left:1394.2px;top:832.9px;font-size:21px;color:#2b3037;letter-spacing:0.52px;">cerove9631@goulink.com</div>
<div class="pill" style="left:1677.5px;top:825.2px;width:113px"><span class="pi" style="left:5.5px;top:5.5px"><svg width="25" height="25" viewBox="0 0 25 25"><rect x="1.500" y="3.500" width="22" height="18" rx="3.500" fill="none" stroke="#656c80" stroke-width="2.200"/><path d="M2.500 7.500 L12.500 14.500 L22.500 7.500" fill="none" stroke="#656c80" stroke-width="2.200" stroke-linecap="round" stroke-linejoin="round"/></svg></span><div class="sep"></div><div class="t" style="left:52.5px;top:9.8px;font-size:17.5px;-webkit-text-stroke:0.6px #6b7280;color:#6b7280;letter-spacing:0.56px;">Email</div></div>
<div class="t" style="left:2061.0px;top:820.6px;font-size:20px;color:#2b3037;letter-spacing:0.49px;">May 03 2024</div>
<div class="t" style="left:2066.7px;top:845.8px;font-size:20px;color:#3b8ad9;letter-spacing:0.39px;">09:45 PM</div>
<div class="t" style="left:2162.6px;top:849.9px;font-size:15.5px;color:#3b8ad9;letter-spacing:-0.43px;">(PDT)</div>
<div class="rowline" style="top:961.1px"></div>
<div class="kb" style="top:909.9px"><i></i><i></i><i></i></div>
<div class="cb" style="left:402px;top:907.2px"><svg width="20" height="18" viewBox="0 0 20 18"><path d="M3 9.500 L7.500 14 L17 3.500" fill="none" stroke="#fff" stroke-width="3.600" stroke-linecap="round" stroke-linejoin="round"/></svg></div>
<div class="av" style="top:889.2px;background:#84b878"><div class="t" style="left:0;width:66px;text-align:center;top:22.9px;font-size:21px;letter-spacing:.4px;color:#fff">TE</div></div>
<div class="t" style="left:580.6px;top:911.7px;font-size:21px;color:#2b3037;letter-spacing:0.50px;">Tommie Eymer</div>
<div class="t" style="left:934.8px;top:911.7px;font-size:21px;color:#2b3037;letter-spacing:1.14px;">(864) 354-4278</div>
<div class="pill" style="left:1122px;top:904.0px;width:99px"><span class="pi" style="left:6px;top:5.5px"><svg width="25.500" height="25.500" viewBox="0 0 24 24"><path d="M22 16.920v3a2 2 0 0 1-2.180 2 19.790 19.790 0 0 1-8.630-3.070 19.500 19.500 0 0 1-6-6 19.790 19.790 0 0 1-3.070-8.670A2 2 0 0 1 4.110 2h3a2 2 0 0 1 2 1.720 12.840 12.840 0 0 0 .7 2.810 2 2 0 0 1-.45 2.110L8.090 9.910a16 16 0 0 0 6 6l1.270-1.270a2 2 0 0 1 2.110-.45 12.840 12.840 0 0 0 2.810.7A2 2 0 0 1 22 16.920z" fill="none" stroke="#656c80" stroke-width="1.800" stroke-linejoin="round"/><path d="M14.500 2 a8 8 0 0 1 7.500 7.500 M14.500 6 a4 4 0 0 1 3.500 3.500" fill="none" stroke="#656c80" stroke-width="1.800" stroke-linecap="round"/></svg></span><div class="sep"></div><div class="t" style="left:53.0px;top:9.8px;font-size:17.5px;-webkit-text-stroke:0.6px #6b7280;color:#6b7280;letter-spacing:0.48px;">Call</div></div>
<div class="t" style="left:1394.2px;top:911.7px;font-size:21px;color:#2b3037;letter-spacing:0.64px;">teymer36@abc.net.au</div>
<div class="pill" style="left:1641.5px;top:904.0px;width:113px"><span class="pi" style="left:5.5px;top:5.5px"><svg width="25" height="25" viewBox="0 0 25 25"><rect x="1.500" y="3.500" width="22" height="18" rx="3.500" fill="none" stroke="#656c80" stroke-width="2.200"/><path d="M2.500 7.500 L12.500 14.500 L22.500 7.500" fill="none" stroke="#656c80" stroke-width="2.200" stroke-linecap="round" stroke-linejoin="round"/></svg></span><div class="sep"></div><div class="t" style="left:52.5px;top:9.8px;font-size:17.5px;-webkit-text-stroke:0.6px #6b7280;color:#6b7280;letter-spacing:0.56px;">Email</div></div>
<div class="t" style="left:2061.0px;top:899.4px;font-size:20px;color:#2b3037;letter-spacing:0.14px;">Jan 18 2023</div>
<div class="t" style="left:2066.7px;top:924.6px;font-size:20px;color:#3b8ad9;letter-spacing:0.14px;">10:00 AM</div>
<div class="t" style="left:2159.8px;top:928.7px;font-size:15.5px;color:#3b8ad9;letter-spacing:-0.22px;">(PST)</div>
<div class="tag" style="top:898.0px;width:114px"><div class="t" style="left:12.3px;top:12.2px;font-size:17.5px;-webkit-text-stroke:0.65px #1e429f;color:#1e429f;letter-spacing:1.24px;">Interested</div></div>
<div class="rowline" style="top:1040.1px"></div>
<div class="kb" style="top:988.8px"><i></i><i></i><i></i></div>
<div class="cb" style="left:402px;top:986.1px"><svg width="20" height="18" viewBox="0 0 20 18"><path d="M3 9.500 L7.500 14 L17 3.500" fill="none" stroke="#fff" stroke-width="3.600" stroke-linecap="round" stroke-linejoin="round"/></svg></div>
<div class="av" style="top:968.0px;background:#a077bf"><div class="t" style="left:0;width:66px;text-align:center;top:22.9px;font-size:21px;letter-spacing:.4px;color:#fff">RG</div></div>
<div class="t" style="left:580.6px;top:990.5px;font-size:21px;color:#2b3037;letter-spacing:0.32px;">Roselle Greenhowe</div>
<div class="t" style="left:1394.2px;top:990.5px;font-size:21px;color:#2b3037;letter-spacing:0.70px;">rgreenhowe3r@phpbb.com</div>
<div class="pill" style="left:1692.5px;top:982.8px;width:113px"><span class="pi" style="left:5.5px;top:5.5px"><svg width="25" height="25" viewBox="0 0 25 25"><rect x="1.500" y="3.500" width="22" height="18" rx="3.500" fill="none" stroke="#656c80" stroke-width="2.200"/><path d="M2.500 7.500 L12.500 14.500 L22.500 7.500" fill="none" stroke="#656c80" stroke-width="2.200" stroke-linecap="round" stroke-linejoin="round"/></svg></span><div class="sep"></div><div class="t" style="left:52.5px;top:9.8px;font-size:17.5px;-webkit-text-stroke:0.6px #6b7280;color:#6b7280;letter-spacing:0.56px;">Email</div></div>
<div class="t" style="left:2061.0px;top:978.2px;font-size:20px;color:#2b3037;letter-spacing:0.14px;">Jan 18 2023</div>
<div class="t" style="left:2066.7px;top:1003.4px;font-size:20px;color:#3b8ad9;letter-spacing:0.14px;">10:00 AM</div>
<div class="t" style="left:2159.8px;top:1007.5px;font-size:15.5px;color:#3b8ad9;letter-spacing:-0.22px;">(PST)</div>
<div class="tag" style="top:976.8px;width:66.8px"><div class="t" style="left:12.3px;top:12.2px;font-size:17.5px;-webkit-text-stroke:0.65px #1e429f;color:#1e429f;letter-spacing:0.96px;">Lead</div></div>
<div class="rowline" style="top:1118.9px"></div>
<div class="kb" style="top:1067.7px"><i></i><i></i><i></i></div>
<div class="cb" style="left:402px;top:1065.0px"><svg width="20" height="18" viewBox="0 0 20 18"><path d="M3 9.500 L7.500 14 L17 3.500" fill="none" stroke="#fff" stroke-width="3.600" stroke-linecap="round" stroke-linejoin="round"/></svg></div>
<div class="av" style="top:1047.0px;background:#7394bd"><div class="t" style="left:0;width:66px;text-align:center;top:22.9px;font-size:21px;letter-spacing:.4px;color:#fff">CM</div></div>
<div class="t" style="left:580.6px;top:1069.5px;font-size:21px;color:#2b3037;letter-spacing:0.70px;">Colette Majury</div>
<div class="t" style="left:1394.2px;top:1069.5px;font-size:21px;color:#2b3037;letter-spacing:0.64px;">cmajury44@amazon.com</div>
<div class="pill" style="left:1673.5px;top:1061.8px;width:113px"><span class="pi" style="left:5.5px;top:5.5px"><svg width="25" height="25" viewBox="0 0 25 25"><rect x="1.500" y="3.500" width="22" height="18" rx="3.500" fill="none" stroke="#656c80" stroke-width="2.200"/><path d="M2.500 7.500 L12.500 14.500 L22.500 7.500" fill="none" stroke="#656c80" stroke-width="2.200" stroke-linecap="round" stroke-linejoin="round"/></svg></span><div class="sep"></div><div class="t" style="left:52.5px;top:9.8px;font-size:17.5px;-webkit-text-stroke:0.6px #6b7280;color:#6b7280;letter-spacing:0.56px;">Email</div></div>
<div class="t" style="left:2061.0px;top:1057.2px;font-size:20px;color:#2b3037;letter-spacing:0.14px;">Jan 18 2023</div>
<div class="t" style="left:2066.7px;top:1082.4px;font-size:20px;color:#3b8ad9;letter-spacing:0.14px;">10:00 AM</div>
<div class="t" style="left:2159.8px;top:1086.5px;font-size:15.5px;color:#3b8ad9;letter-spacing:-0.22px;">(PST)</div>
<svg class="abs" style="left:2305.500px;top:1072.3px" width="22" height="17" viewBox="0 0 22 17"><rect width="22" height="17" rx="2.500" fill="#2388ec"/><path d="M1.500 3 L11 10 L20.500 3" fill="none" stroke="#fff" stroke-width="2" stroke-linejoin="round"/></svg>
<div class="t" style="left:2339.0px;top:1069.9px;font-size:20.5px;color:#2b3037;letter-spacing:0.46px;">1 year ago</div>
<div class="tag" style="top:1055.8px;width:90px"><div class="t" style="left:12.3px;top:12.2px;font-size:17.5px;-webkit-text-stroke:0.65px #1e429f;color:#1e429f;letter-spacing:1.13px;">Booked</div></div>
<div class="rowline" style="top:1197.8px"></div>
<div class="kb" style="top:1146.5px"><i></i><i></i><i></i></div>
<div class="cb" style="left:402px;top:1143.8px"><svg width="20" height="18" viewBox="0 0 20 18"><path d="M3 9.500 L7.500 14 L17 3.500" fill="none" stroke="#fff" stroke-width="3.600" stroke-linecap="round" stroke-linejoin="round"/></svg></div>
<div class="av" style="top:1125.8px;background:#bdb070"><div class="t" style="left:0;width:66px;text-align:center;top:22.9px;font-size:21px;letter-spacing:.4px;color:#fff">HM</div></div>
<div class="t" style="left:580.6px;top:1148.3px;font-size:21px;color:#2b3037;letter-spacing:0.61px;">Happy Machen</div>
<div class="t" style="left:1394.2px;top:1148.3px;font-size:21px;color:#2b3037;letter-spacing:0.53px;">hmachen45@si.edu</div>
<div class="pill" style="left:1617.5px;top:1140.6px;width:113px"><span class="pi" style="left:5.5px;top:5.5px"><svg width="25" height="25" viewBox="0 0 25 25"><rect x="1.500" y="3.500" width="22" height="18" rx="3.500" fill="none" stroke="#656c80" stroke-width="2.200"/><path d="M2.500 7.500 L12.500 14.500 L22.500 7.500" fill="none" stroke="#656c80" stroke-width="2.200" stroke-linecap="round" stroke-linejoin="round"/></svg></span><div class="sep"></div><div class="t" style="left:52.5px;top:9.8px;font-size:17.5px;-webkit-text-stroke:0.6px #6b7280;color:#6b7280;letter-spacing:0.56px;">Email</div></div>
<div class="t" style="left:2061.0px;top:1136.0px;font-size:20px;color:#2b3037;letter-spacing:0.14px;">Jan 18 2023</div>
<div class="t" style="left:2066.7px;top:1161.2px;font-size:20px;color:#3b8ad9;letter-spacing:0.14px;">10:00 AM</div>
<div class="t" style="left:2159.8px;top:1165.3px;font-size:15.5px;color:#3b8ad9;letter-spacing:-0.22px;">(PST)</div>
<div class="tag" style="top:1134.6px;width:149px"><div class="t" style="left:12.3px;top:12.2px;font-size:17.5px;-webkit-text-stroke:0.65px #1e429f;color:#1e429f;letter-spacing:1.12px;">Not Interested</div></div>
<div class="rowline" style="top:1276.8px"></div>
<div class="kb" style="top:1225.5px"><i></i><i></i><i></i></div>
<div class="cb" style="left:402px;top:1222.8px"><svg width="20" height="18" viewBox="0 0 20 18"><path d="M3 9.500 L7.500 14 L17 3.500" fill="none" stroke="#fff" stroke-width="3.600" stroke-linecap="round" stroke-linejoin="round"/></svg></div>
<div class="av" style="top:1204.7px;background:#7683c2"><div class="t" style="left:0;width:66px;text-align:center;top:22.9px;font-size:21px;letter-spacing:.4px;color:#fff">VH</div></div>
<div class="t" style="left:580.6px;top:1227.2px;font-size:21px;color:#2b3037;letter-spacing:0.48px;">Vanni Harverson</div>
<div class="t" style="left:934.8px;top:1227.2px;font-size:21px;color:#2b3037;letter-spacing:0.70px;">+1 939 475 0295</div>
<div class="pill" style="left:1131.6px;top:1219.5px;width:99px"><span class="pi" style="left:6px;top:5.5px"><svg width="25.500" height="25.500" viewBox="0 0 24 24"><path d="M22 16.920v3a2 2 0 0 1-2.180 2 19.790 19.790 0 0 1-8.630-3.070 19.500 19.500 0 0 1-6-6 19.790 19.790 0 0 1-3.070-8.670A2 2 0 0 1 4.110 2h3a2 2 0 0 1 2 1.720 12.840 12.840 0 0 0 .7 2.810 2 2 0 0 1-.45 2.110L8.090 9.910a16 16 0 0 0 6 6l1.270-1.270a2 2 0 0 1 2.110-.45 12.840 12.840 0 0 0 2.810.7A2 2 0 0 1 22 16.920z" fill="none" stroke="#656c80" stroke-width="1.800" stroke-linejoin="round"/><path d="M14.500 2 a8 8 0 0 1 7.500 7.500 M14.500 6 a4 4 0 0 1 3.500 3.500" fill="none" stroke="#656c80" stroke-width="1.800" stroke-linecap="round"/></svg></span><div class="sep"></div><div class="t" style="left:53.0px;top:9.8px;font-size:17.5px;-webkit-text-stroke:0.6px #6b7280;color:#6b7280;letter-spacing:0.48px;">Call</div></div>
<div class="t" style="left:1394.2px;top:1227.2px;font-size:21px;color:#2b3037;letter-spacing:0.65px;">vharverson3f@psu.edu</div>
<div class="pill" style="left:1652px;top:1219.5px;width:113px"><span class="pi" style="left:5.5px;top:5.5px"><svg width="25" height="25" viewBox="0 0 25 25"><rect x="1.500" y="3.500" width="22" height="18" rx="3.500" fill="none" stroke="#656c80" stroke-width="2.200"/><path d="M2.500 7.500 L12.500 14.500 L22.500 7.500" fill="none" stroke="#656c80" stroke-width="2.200" stroke-linecap="round" stroke-linejoin="round"/></svg></span><div class="sep"></div><div class="t" style="left:52.5px;top:9.8px;font-size:17.5px;-webkit-text-stroke:0.6px #6b7280;color:#6b7280;letter-spacing:0.56px;">Email</div></div>
<div class="t" style="left:2061.0px;top:1214.9px;font-size:20px;color:#2b3037;letter-spacing:0.14px;">Jan 18 2023</div>
<div class="t" style="left:2066.7px;top:1240.1px;font-size:20px;color:#3b8ad9;letter-spacing:0.14px;">10:00 AM</div>
<div class="t" style="left:2159.8px;top:1244.2px;font-size:15.5px;color:#3b8ad9;letter-spacing:-0.22px;">(PST)</div>
<svg class="abs" style="left:2305.500px;top:1230.0px" width="22" height="17" viewBox="0 0 22 17"><rect width="22" height="17" rx="2.500" fill="#2388ec"/><path d="M1.500 3 L11 10 L20.500 3" fill="none" stroke="#fff" stroke-width="2" stroke-linejoin="round"/></svg>
<div class="t" style="left:2339.0px;top:1227.6px;font-size:20.5px;color:#2b3037;letter-spacing:0.46px;">1 year ago</div>
<div class="tag" style="top:1213.5px;width:90px"><div class="t" style="left:12.3px;top:12.2px;font-size:17.5px;-webkit-text-stroke:0.65px #1e429f;color:#1e429f;letter-spacing:1.13px;">Booked</div></div>
<div class="rowline" style="top:1355.8px"></div>
<div class="kb" style="top:1304.5px"><i></i><i></i><i></i></div>
<div class="cb" style="left:402px;top:1301.8px"><svg width="20" height="18" viewBox="0 0 20 18"><path d="M3 9.500 L7.500 14 L17 3.500" fill="none" stroke="#fff" stroke-width="3.600" stroke-linecap="round" stroke-linejoin="round"/></svg></div>
<div class="av" style="top:1283.7px;background:#74be9f"><div class="t" style="left:0;width:66px;text-align:center;top:22.9px;font-size:21px;letter-spacing:.4px;color:#fff">JL</div></div>
<div class="t" style="left:580.6px;top:1306.2px;font-size:21px;color:#2b3037;letter-spacing:0.57px;">Jayme Lindop</div>
<div class="t" style="left:1394.2px;top:1306.2px;font-size:21px;color:#2b3037;letter-spacing:0.71px;">jlindop3x@wp.com</div>
<div class="pill" style="left:1609px;top:1298.5px;width:113px"><span class="pi" style="left:5.5px;top:5.5px"><svg width="25" height="25" viewBox="0 0 25 25"><rect x="1.500" y="3.500" width="22" height="18" rx="3.500" fill="none" stroke="#656c80" stroke-width="2.200"/><path d="M2.500 7.500 L12.500 14.500 L22.500 7.500" fill="none" stroke="#656c80" stroke-width="2.200" stroke-linecap="round" stroke-linejoin="round"/></svg></span><div class="sep"></div><div class="t" style="left:52.5px;top:9.8px;font-size:17.5px;-webkit-text-stroke:0.6px #6b7280;color:#6b7280;letter-spacing:0.56px;">Email</div></div>
<div class="t" style="left:2061.0px;top:1293.9px;font-size:20px;color:#2b3037;letter-spacing:0.14px;">Jan 18 2023</div>
<div class="t" style="left:2066.7px;top:1319.1px;font-size:20px;color:#3b8ad9;letter-spacing:0.14px;">10:00 AM</div>
<div class="t" style="left:2159.8px;top:1323.2px;font-size:15.5px;color:#3b8ad9;letter-spacing:-0.22px;">(PST)</div>
<div class="tag" style="top:1292.5px;width:149px"><div class="t" style="left:12.3px;top:12.2px;font-size:17.5px;-webkit-text-stroke:0.65px #1e429f;color:#1e429f;letter-spacing:1.12px;">Not Interested</div></div>
<div class="rowline" style="top:1434.2px"></div>
<div class="kb" style="top:1383.2px"><i></i><i></i><i></i></div>
<div class="cb" style="left:402px;top:1380.5px"><svg width="20" height="18" viewBox="0 0 20 18"><path d="M3 9.500 L7.500 14 L17 3.500" fill="none" stroke="#fff" stroke-width="3.600" stroke-linecap="round" stroke-linejoin="round"/></svg></div>
<div class="av" style="top:1362.7px;background:#76bd8b"><div class="t" style="left:0;width:66px;text-align:center;top:22.9px;font-size:21px;letter-spacing:.4px;color:#fff">WJ</div></div>
<div class="t" style="left:580.6px;top:1385.2px;font-size:21px;color:#2b3037;letter-spacing:0.50px;">Ware Jellybrand</div>
<div class="t" style="left:1394.2px;top:1385.2px;font-size:21px;color:#2b3037;letter-spacing:0.73px;">wjellybrand3o@booking.com</div>
<div class="pill" style="left:1709.5px;top:1377.5px;width:113px"><span class="pi" style="left:5.5px;top:5.5px"><svg width="25" height="25" viewBox="0 0 25 25"><rect x="1.500" y="3.500" width="22" height="18" rx="3.500" fill="none" stroke="#656c80" stroke-width="2.200"/><path d="M2.500 7.500 L12.500 14.500 L22.500 7.500" fill="none" stroke="#656c80" stroke-width="2.200" stroke-linecap="round" stroke-linejoin="round"/></svg></span><div class="sep"></div><div class="t" style="left:52.5px;top:9.8px;font-size:17.5px;-webkit-text-stroke:0.6px #6b7280;color:#6b7280;letter-spacing:0.56px;">Email</div></div>
<div class="t" style="left:2061.0px;top:1372.9px;font-size:20px;color:#2b3037;letter-spacing:0.14px;">Jan 18 2023</div>
<div class="t" style="left:2066.7px;top:1398.1px;font-size:20px;color:#3b8ad9;letter-spacing:0.14px;">10:00 AM</div>
<div class="t" style="left:2159.8px;top:1402.2px;font-size:15.5px;color:#3b8ad9;letter-spacing:-0.22px;">(PST)</div>
<div class="tag" style="top:1371.5px;width:66.8px"><div class="t" style="left:12.3px;top:12.2px;font-size:17.5px;-webkit-text-stroke:0.65px #1e429f;color:#1e429f;letter-spacing:0.96px;">Lead</div></div>
<div class="vline" style="left:917px"></div>
<div class="vline" style="left:1378px"></div>
<div class="vline" style="left:2044px"></div>
<div class="vline" style="left:2278px"></div>
<div class="vline" style="left:2623px"></div>
<div class="abs" style="left:2927px;top:434px;width:11px;height:1001px;background:#fdfdfd;border-left:1px solid #e6e6e6"></div>
<div class="abs" style="left:2928px;top:434px;width:10px;height:583.5px;background:#bcbcbc;border-radius:5px 0 0 5px"></div>
<div class="t" style="letter-spacing:0.77px;left:1326.800px;top:1468.300px;font-size:20.500px;color:#242b38">Total <b>204</b> records | <b>1</b> of 11 Pages</div>
<div class="btn" style="left:1675px;top:1450.500px;width:42px;height:58px;border-radius:12px;box-shadow:0 3px 10px rgba(0,0,0,.06)"><div class="t" style="left:0;width:40px;text-align:center;top:18.500px;font-size:20.500px;color:#242b38">1</div></div>
<svg class="abs" style="left:1730.500px;top:1470.500px" width="13" height="16" viewBox="0 0 13 16"><path d="M3.500 2.500 L8.800 8 L3.500 13.500" fill="none" stroke="#1f2937" stroke-width="3.200" stroke-linecap="round" stroke-linejoin="round"/></svg>
<div class="t" style="left:1782.3px;top:1469.2px;font-size:20.5px;color:#242b38;letter-spacing:0.58px;">Page Size: 20</div>
<svg class="abs" style="left:1936px;top:1476px" width="12" height="7" viewBox="0 0 12 7"><path d="M0 0 H12 L6 7 Z" fill="#adb6ba" stroke="#adb6ba" stroke-width=".8" stroke-linejoin="round"/></svg>
<div class="abs" style="left:2836px;top:1363px;width:72px;height:72px;border-radius:50%;background:#1a7ee8;box-shadow:0 1px 7px rgba(0,0,0,.12)"><div class="t" style="left:20px;width:32px;text-align:center;top:10px;font-size:54px;font-weight:700;transform:scaleX(.8);color:transparent;background:linear-gradient(180deg,#fff 14%,#ff8a3d 26%,#f8353c 50%,#6a2a86 72%,#e0304a 84%,#5a2a88 98%);-webkit-background-clip:text;background-clip:text;filter:drop-shadow(0 0 1px rgba(255,255,255,.55))">?</div></div>
<div class="abs" style="left:1263px;top:473px;width:147px;height:147px;border-radius:50%;background:rgba(0,0,0,.4)"></div>
<div class="abs" style="left:1300.500px;top:510.500px;width:72px;height:72px;border-radius:50%;background:#000"></div>
</div>
</body>
</html>
